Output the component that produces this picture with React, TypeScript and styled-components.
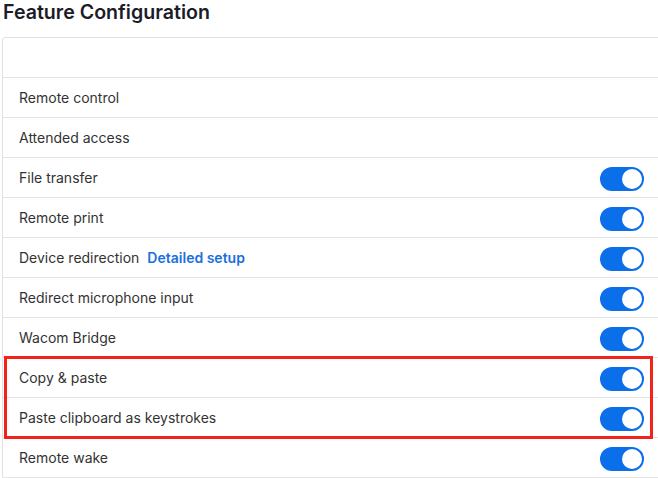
import React from "react";
import styled, { createGlobalStyle } from "styled-components";

const GlobalStyle = createGlobalStyle`
  html, body {
    margin: 0;
    padding: 0;
    background: #ffffff;
    overflow: hidden;
  }
  body {
    font-family: "Inter", "Liberation Sans", sans-serif;
    color: #333333;
  }
`;

const Page = styled.div`
  padding: 0 0 0 2px;
  margin-right: -4px;
`;

const Title = styled.h1`
  margin: 0;
  padding: 0 0 0 1px;
  height: 37px;
  font-size: 19.6px;
  line-height: 24px;
  font-weight: 600;
  color: #1c1c28;
`;

const Card = styled.div`
  border: 1px solid #e2e2e2;
  border-bottom: none;
  border-radius: 4px 4px 0 0;
`;

const HeaderRow = styled.div`
  height: 39px;
  border-bottom: 1px solid #e4e4e4;
`;

const Row = styled.div`
  display: flex;
  align-items: center;
  justify-content: space-between;
  height: 39px;
  padding: 0 17px 0 16px;
  border-bottom: 1px solid #e4e4e4;
  font-size: 14px;
`;

const Label = styled.span`
  display: flex;
  align-items: center;
  gap: 8px;
  color: #333333;
`;

const SetupLink = styled.a`
  color: #1a6fe0;
  font-weight: 600;
  text-decoration: none;
  cursor: pointer;
`;

const Switch = styled.span<{ $on: boolean }>`
  position: relative;
  display: inline-block;
  width: 44px;
  height: 24px;
  border-radius: 12px;
  margin-top: 2px;
  background: ${(p) => (p.$on ? "#0a6fe8" : "#c8c8c8")};

  &::after {
    content: "";
    position: absolute;
    top: 2px;
    left: ${(p) => (p.$on ? "22px" : "2px")};
    width: 20px;
    height: 20px;
    border-radius: 50%;
    background: #ffffff;
  }
`;

const Highlight = styled.div`
  position: relative;

  &::after {
    content: "";
    position: absolute;
    top: -2px;
    bottom: -1px;
    left: 1px;
    right: 8px;
    border: 3px solid #f2231a;
    pointer-events: none;
  }
`;

type Feature = {
  label: string;
  toggle?: boolean;
  link?: string;
};

const features: Feature[] = [
  { label: "Remote control" },
  { label: "Attended access" },
  { label: "File transfer", toggle: true },
  { label: "Remote print", toggle: true },
  { label: "Device redirection", toggle: true, link: "Detailed setup" },
  { label: "Redirect microphone input", toggle: true },
  { label: "Wacom Bridge", toggle: true },
];

const highlighted: Feature[] = [
  { label: "Copy & paste", toggle: true },
  { label: "Paste clipboard as keystrokes", toggle: true },
];

const FeatureRow = ({ label, toggle, link }: Feature) => (
  <Row>
    <Label>
      {label}
      {link && <SetupLink>{link}</SetupLink>}
    </Label>
    {toggle && <Switch $on />}
  </Row>
);

export default function App() {
  return (
    <>
      <GlobalStyle />
      <Page>
        <Title>Feature Configuration</Title>
        <Card>
          <HeaderRow />
          {features.map((f) => (
            <FeatureRow key={f.label} {...f} />
          ))}
          <Highlight>
            {highlighted.map((f) => (
              <FeatureRow key={f.label} {...f} />
            ))}
          </Highlight>
          <FeatureRow label="Remote wake" toggle />
        </Card>
      </Page>
    </>
  );
}
